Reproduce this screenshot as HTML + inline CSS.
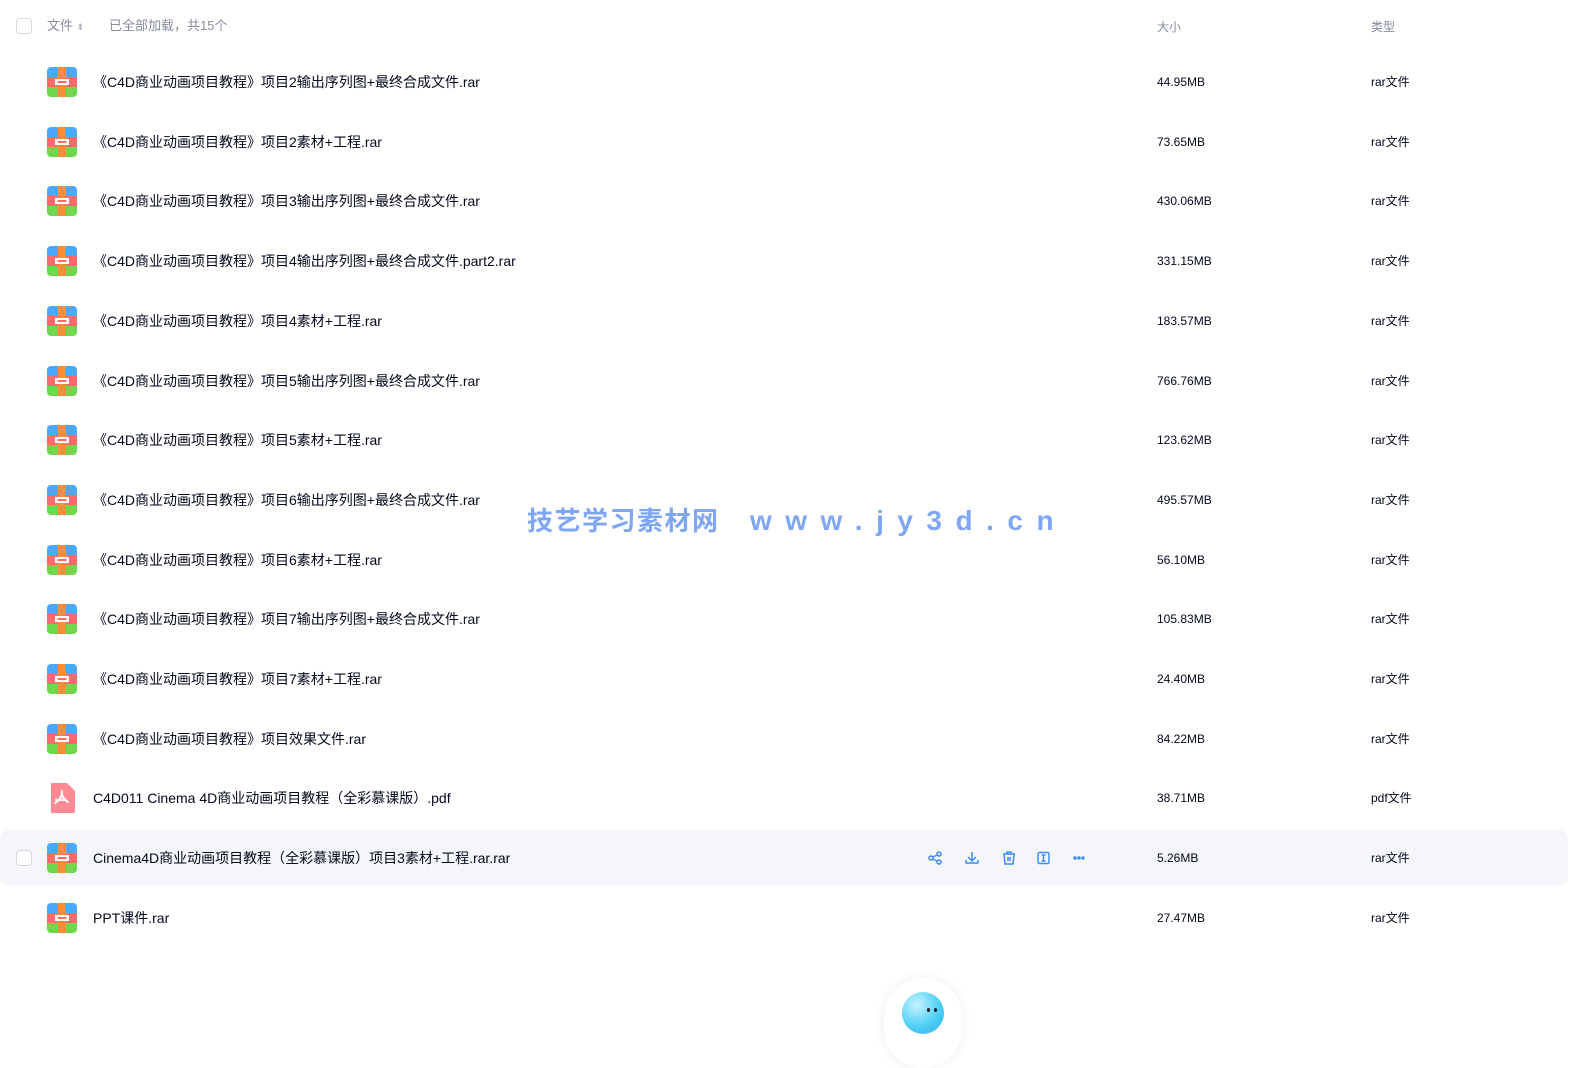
<!DOCTYPE html>
<html><head><meta charset="utf-8"><style>
body{margin:0;width:1576px;height:1046px;background:#fff;position:relative;overflow:hidden;font-family:"Liberation Sans","Noto Sans CJK SC",sans-serif;}
.a{position:absolute;white-space:nowrap}
.hd{color:#878c9c;font-size:13px;top:17px;line-height:18px}
.cb{position:absolute;width:14px;height:14px;border:1px solid #d4d7de;border-radius:4px;background:#fff}
.row{position:absolute;left:0;width:1568px;height:56px}
.row.hl{background:#f5f6fa;border-radius:8px}
.ic{position:absolute;left:47px;top:13px;width:30px;height:30px;border-radius:4px;overflow:hidden}
.nm{position:absolute;left:93px;top:19px;font-size:14px;line-height:18px;color:#03081a}
.sz{position:absolute;left:1157px;top:20px;font-size:12px;line-height:16px;color:#03081a}
.tp{position:absolute;left:1371px;top:20px;font-size:12px;line-height:16px;color:#03081a}
</style></head><body>
<div class="cb" style="left:16px;top:18px"></div>
<div class="a hd" style="left:47px">文件 <span style="font-size:9px;color:#b0b4c0">⬍</span></div>
<div class="a hd" style="left:109px">已全部加载，共15个</div>
<div class="a hd" style="left:1157px;font-size:12px;top:18px">大小</div>
<div class="a hd" style="left:1371px;font-size:12px;top:18px">类型</div>
<div id="rows"></div>
<script>
const R=[["《C4D商业动画项目教程》项目2输出序列图+最终合成文件.rar","44.95MB"],["《C4D商业动画项目教程》项目2素材+工程.rar","73.65MB"],["《C4D商业动画项目教程》项目3输出序列图+最终合成文件.rar","430.06MB"],["《C4D商业动画项目教程》项目4输出序列图+最终合成文件.part2.rar","331.15MB"],["《C4D商业动画项目教程》项目4素材+工程.rar","183.57MB"],["《C4D商业动画项目教程》项目5输出序列图+最终合成文件.rar","766.76MB"],["《C4D商业动画项目教程》项目5素材+工程.rar","123.62MB"],["《C4D商业动画项目教程》项目6输出序列图+最终合成文件.rar","495.57MB"],["《C4D商业动画项目教程》项目6素材+工程.rar","56.10MB"],["《C4D商业动画项目教程》项目7输出序列图+最终合成文件.rar","105.83MB"],["《C4D商业动画项目教程》项目7素材+工程.rar","24.40MB"],["《C4D商业动画项目教程》项目效果文件.rar","84.22MB"],["C4D011 Cinema 4D商业动画项目教程（全彩慕课版）.pdf","38.71MB","pdf"],["Cinema4D商业动画项目教程（全彩慕课版）项目3素材+工程.rar.rar","5.26MB","rar",1],["PPT课件.rar","27.47MB"]];
const rar='<svg width="30" height="30" viewBox="0 0 30 30"><rect width="30" height="10" fill="#4aa8ff"/><rect y="10" width="30" height="10" fill="#ff6b6b"/><rect y="20" width="30" height="10" fill="#6ed84c"/><rect x="11" width="8" height="30" fill="#ff8c3a"/><rect x="8" y="12" width="14" height="6" fill="#fff"/><rect x="10.5" y="14" width="9" height="2" fill="#ff6b6b"/></svg>';
const pdf='<svg width="30" height="30" viewBox="0 0 30 30"><path d="M4 0h16l8 8v22H4z" fill="#ff8a94"/><path d="M15 8c-1 3 1 8 6 11M15 8c1 4-3 10-7 12M9 17h10" stroke="#fff" stroke-width="2" fill="none" stroke-linecap="round"/></svg>';
let h='';
R.forEach((r,i)=>{const y=Math.round(54+i*59.7);
h+=`<div class="row${r[3]?' hl':''}" style="top:${y}px">`+(r[3]?'<div class="cb" style="left:16px;top:20px"></div>':'')+`<div class="ic">${r[2]=='pdf'?pdf:rar}</div><div class="nm">${r[0]}</div><div class="sz">${r[1]}</div><div class="tp">${r[2]||'rar'}文件</div>`;
if(r[3])h+=`<svg class="a" style="left:928px;top:20px" width="160" height="16" viewBox="0 0 160 16" fill="none" stroke="#3f8bf7" stroke-width="1.5"><circle cx="3" cy="8" r="2"/><circle cx="11" cy="4" r="2"/><circle cx="11" cy="12" r="2"/><path d="M5 7l4-2M5 9l4 2"/><path d="M44 2v8M40 7l4 4 4-4M38 10v3h12v-3"/><path d="M75 4h12M79 4v-2h4v2M76 4l1 10h8l1-10M80 7v4M82 7v4"/><rect x="110" y="2.5" width="11" height="11" rx="1.5"/><path d="M113.5 5h4M115.5 5v6M113.5 11h4"/><circle cx="147" cy="8" r="1" fill="#3f8bf7"/><circle cx="151" cy="8" r="1" fill="#3f8bf7"/><circle cx="155" cy="8" r="1" fill="#3f8bf7"/></svg>`;
h+='</div>';});
document.getElementById('rows').innerHTML=h;
</script>
<div class="a" style="left:527px;top:505px;font-size:26px;line-height:32px;font-weight:bold;color:#7fa6f5;letter-spacing:1.5px">技艺学习素材网</div>
<div class="a" style="left:750px;top:505px;font-size:28px;line-height:32px;font-weight:bold;color:#7fa6f5;letter-spacing:13.5px">www.jy3d.cn</div>
<div class="a" style="left:884px;top:978px;width:78px;height:90px;border-radius:39px;background:#fff;box-shadow:0 0 12px rgba(0,0,0,.07)"></div>
<div class="a" style="left:902px;top:992px;width:42px;height:42px;border-radius:50%;background:radial-gradient(circle at 35% 30%,#c8f4ff,#4fd0f5 55%,#2ab0e8)"></div>
<div class="a" style="left:927px;top:1008px;width:3px;height:4px;background:#223;border-radius:2px"></div>
<div class="a" style="left:934px;top:1008px;width:3px;height:4px;background:#223;border-radius:2px"></div>
</body></html>
